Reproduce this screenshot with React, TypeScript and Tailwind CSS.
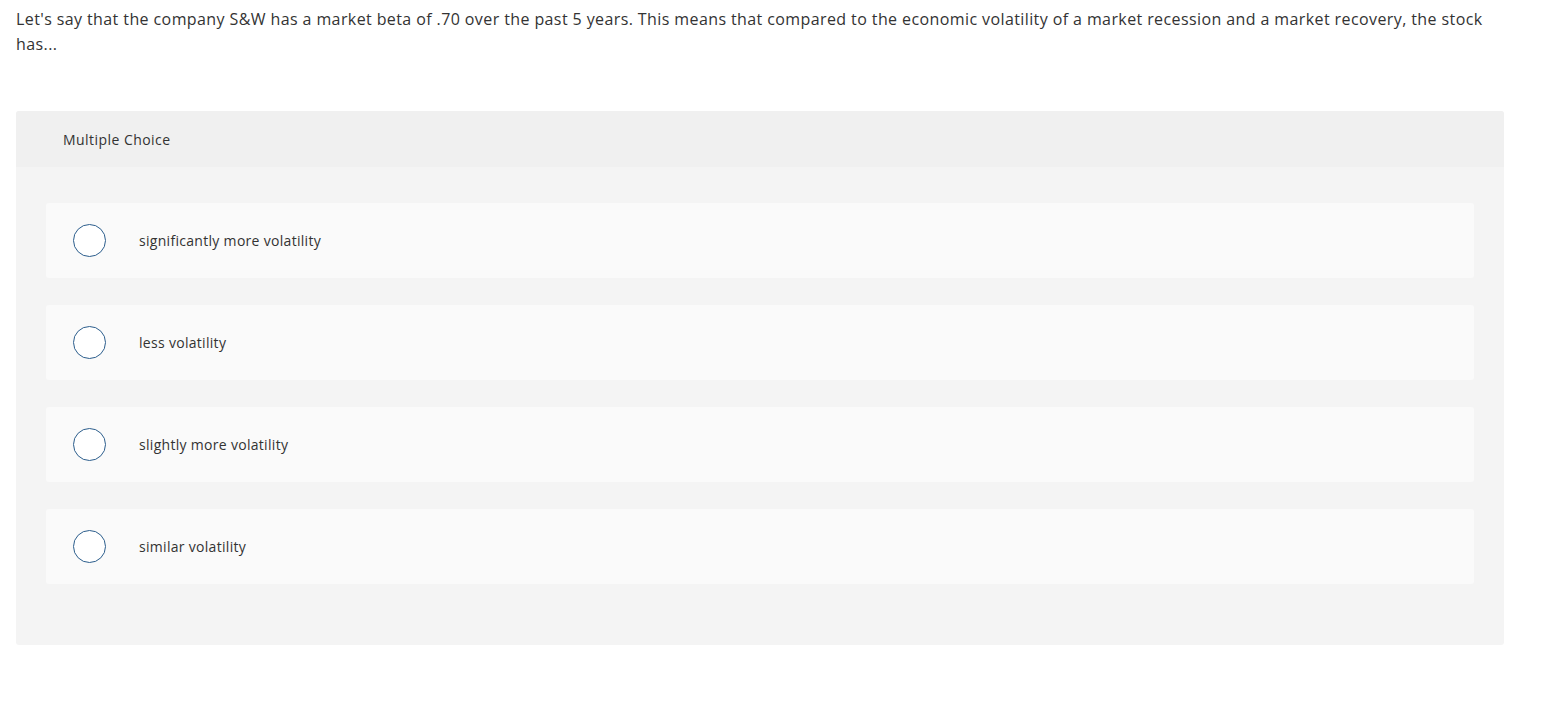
import React from 'react';

const options = [
  "significantly more volatility",
  "less volatility",
  "slightly more volatility",
  "similar volatility",
];

const App = () => {
  return (
    <div className="min-h-screen bg-white px-4 pt-[7px] text-[#333] font-['Open_Sans',sans-serif]">
      <p className="w-[1488px] text-[16px] leading-[25px] tracking-[0.4px]">
        Let's say that the company S&amp;W has a market beta of .70 over the past 5 years. This means that compared to the economic volatility of a market recession and a market recovery, the stock has...
      </p>

      <div className="mt-[54px] w-[1488px] rounded-[3px] bg-[#f4f4f4] pb-[61px]">
        <div className="flex h-[56px] items-center rounded-t-[3px] bg-[#f0f0f0] px-[47px] text-[14px] tracking-[0.45px]">
          Multiple Choice
        </div>
        <div className="flex flex-col gap-[27px] px-[30px] pt-[36px]">
          {options.map(opt => (
            <div key={opt} className="flex h-[75px] items-center rounded-[3px] bg-[#fafafa]">
              <span className="ml-[27px] h-[33px] w-[33px] rounded-full border border-[#2b5d8c] bg-white"></span>
              <span className="ml-[33px] text-[14px] tracking-[0.3px]">{opt}</span>
            </div>
          ))}
        </div>
      </div>
    </div>
  );
};

export default App;
